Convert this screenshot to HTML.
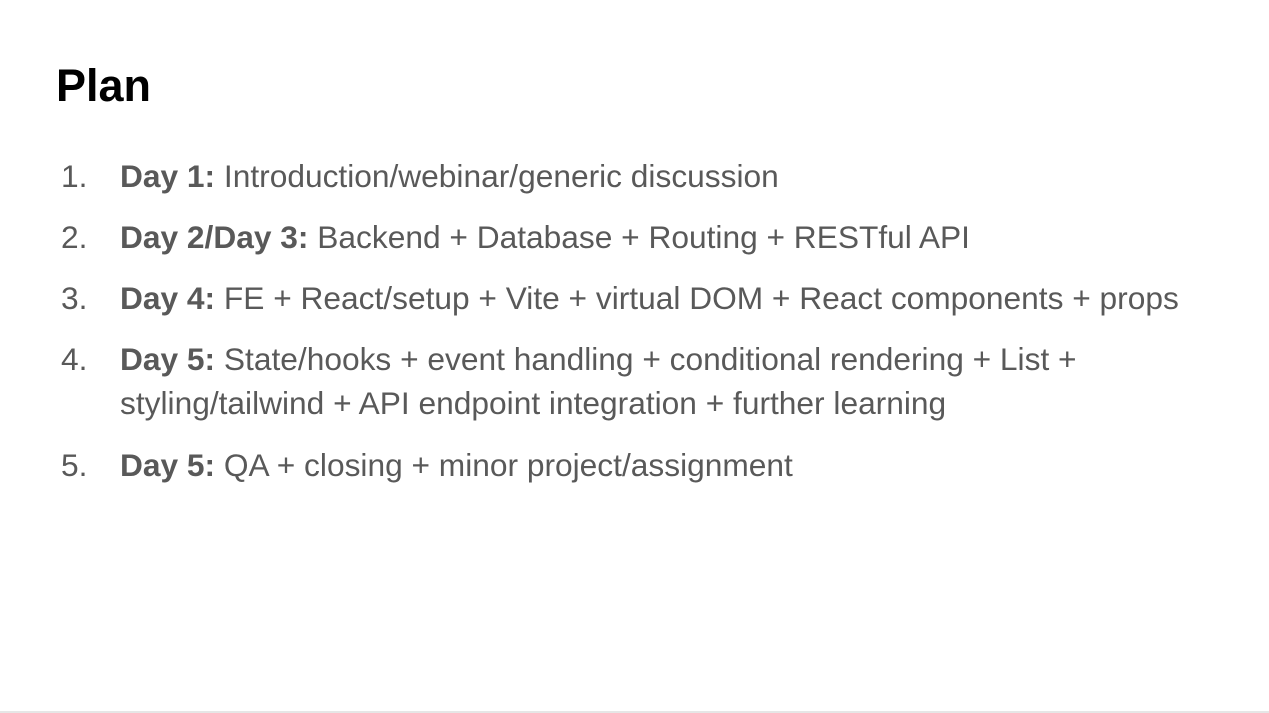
<!DOCTYPE html>
<html><head><style>
html,body{margin:0;padding:0}
body{width:1269px;height:713px;background:#fff;position:relative;overflow:hidden;font-family:"Liberation Sans",Arial,sans-serif}
.t{position:absolute;left:56px;top:60px;font-size:45px;font-weight:bold;color:#000;line-height:52px}
.l{position:absolute;font-size:31.7px;color:#595959;line-height:34px;white-space:nowrap}
.n{left:61px}.x{left:120px}
b{font-weight:bold}
.bot{position:absolute;left:0;right:0;bottom:0;height:2px;background:#e6e6e6}
</style></head><body>
<div class="t">Plan</div>
<div class="l n" style="top:159px">1.</div><div class="l x" style="top:159px"><b>Day 1:</b> Introduction/webinar/generic discussion</div>
<div class="l n" style="top:220px">2.</div><div class="l x" style="top:220px"><b>Day 2/Day 3:</b> Backend + Database + Routing + RESTful API</div>
<div class="l n" style="top:281px">3.</div><div class="l x" style="top:281px"><b>Day 4:</b> FE + React/setup + Vite + virtual DOM + React components + props</div>
<div class="l n" style="top:342px">4.</div><div class="l x" style="top:342px"><b>Day 5:</b> State/hooks + event handling + conditional rendering + List +</div>
<div class="l x" style="top:386px">styling/tailwind + API endpoint integration + further learning</div>
<div class="l n" style="top:448px">5.</div><div class="l x" style="top:448px"><b>Day 5:</b> QA + closing + minor project/assignment</div>
<div class="bot"></div>
</body></html>
